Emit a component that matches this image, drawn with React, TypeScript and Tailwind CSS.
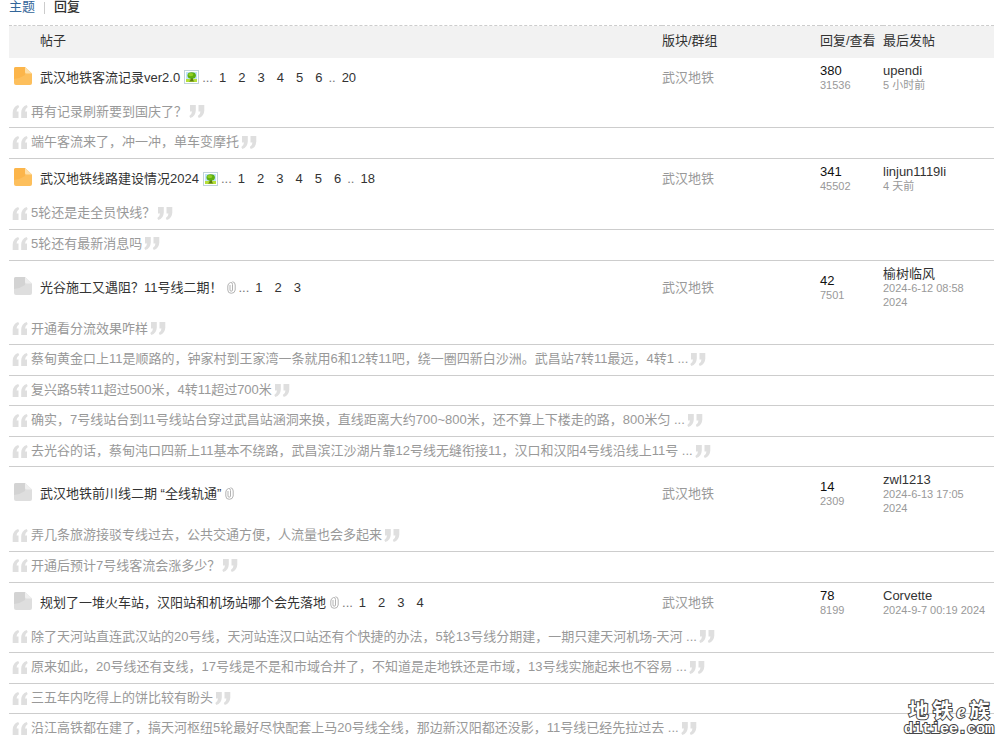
import React from 'react';

interface Thread {
  title: string;
  hot?: boolean;
  attach: 'image' | 'clip';
  pages: number[];
  lastPage?: number;
  replies: number;
  views: number;
  author: string;
  date: string;
  quotes: string[];
}

const forumName = '武汉地铁';

const threads: Thread[] = [
  {
    title: '武汉地铁客流记录ver2.0',
    hot: true,
    attach: 'image',
    pages: [1, 2, 3, 4, 5, 6],
    lastPage: 20,
    replies: 380,
    views: 31536,
    author: 'upendi',
    date: '5 小时前',
    quotes: ['再有记录刷新要到国庆了？', '端午客流来了，冲一冲，单车变摩托'],
  },
  {
    title: '武汉地铁线路建设情况2024',
    hot: true,
    attach: 'image',
    pages: [1, 2, 3, 4, 5, 6],
    lastPage: 18,
    replies: 341,
    views: 45502,
    author: 'linjun1119li',
    date: '4 天前',
    quotes: ['5轮还是走全员快线？', '5轮还有最新消息吗'],
  },
  {
    title: '光谷施工又遇阻？11号线二期！',
    attach: 'clip',
    pages: [1, 2, 3],
    replies: 42,
    views: 7501,
    author: '榆树临风',
    date: '2024-6-12 08:58 2024',
    quotes: [
      '开通看分流效果咋样',
      '蔡甸黄金口上11是顺路的，钟家村到王家湾一条就用6和12转11吧，绕一圈四新白沙洲。武昌站7转11最远，4转1 ...',
      '复兴路5转11超过500米，4转11超过700米',
      '确实，7号线站台到11号线站台穿过武昌站涵洞来换，直线距离大约700~800米，还不算上下楼走的路，800米匀 ...',
      '去光谷的话，蔡甸沌口四新上11基本不绕路，武昌滨江沙湖片靠12号线无缝衔接11，汉口和汉阳4号线沿线上11号 ...',
    ],
  },
  {
    title: '武汉地铁前川线二期 “全线轨通”',
    attach: 'clip',
    pages: [],
    replies: 14,
    views: 2309,
    author: 'zwl1213',
    date: '2024-6-13 17:05 2024',
    quotes: [
      '弄几条旅游接驳专线过去，公共交通方便，人流量也会多起来',
      '开通后预计7号线客流会涨多少？',
    ],
  },
  {
    title: '规划了一堆火车站，汉阳站和机场站哪个会先落地',
    attach: 'clip',
    pages: [1, 2, 3, 4],
    replies: 78,
    views: 8199,
    author: 'Corvette',
    date: '2024-9-7 00:19 2024',
    quotes: [
      '除了天河站直连武汉站的20号线，天河站连汉口站还有个快捷的办法，5轮13号线分期建，一期只建天河机场-天河 ...',
      '原来如此，20号线还有支线，17号线是不是和市域合并了，不知道是走地铁还是市域，13号线实施起来也不容易 ...',
      '三五年内吃得上的饼比较有盼头',
      '沿江高铁都在建了，搞天河枢纽5轮最好尽快配套上马20号线全线，那边新汉阳都还没影，11号线已经先拉过去 ...',
    ],
  },
];

const PageIcon = ({ hot }: { hot?: boolean }) => (
  <svg width="18" height="18" viewBox="0 0 18 18" aria-hidden="true">
    <path d="M2 0H11L18 6.500V16Q18 18 16 18H2Q0 18 0 16V2Q0 0 2 0Z" fill={hot ? '#fdbf5c' : '#dedede'} />
    <path d="M2 0H11V8Q6 11.500 0 12V2Q0 0 2 0Z" fill={hot ? '#fcb54a' : '#d3d3d3'} />
    <path d="M11 0L18 6.500H12.500Q11 6.500 11 5Z" fill={hot ? '#fedfa8' : '#efefef'} />
  </svg>
);

const ImageIcon = () => (
  <svg width="15" height="14" viewBox="0 0 15 14" aria-hidden="true">
    <rect x=".5" y=".5" width="14" height="13" fill="#fff" stroke="#c0d3da" />
    <rect x="2" y="2" width="11" height="7" fill="#bfe4fa" />
    <rect x="2" y="9" width="11" height="3" fill="#b4df38" />
    <path d="M6.500 7H9V10L10.500 11.500H5L6.500 10Z" fill="#5c7d12" />
    <ellipse cx="7.700" cy="5.400" rx="4.200" ry="3.200" fill="#5db012" />
    <ellipse cx="6.800" cy="4.600" rx="2.500" ry="1.700" fill="#93cf24" />
  </svg>
);

const ClipIcon = () => (
  <svg width="9" height="13" viewBox="0 0 9 13" fill="none" stroke="#b3b3b3" aria-hidden="true">
    <path d="M3 4V9Q3 10.200 4.200 10.200T5.500 9V3.500Q5.500 1 3.500 1.500Q.8 2.500.8 5V9Q.8 12.300 4.300 12.300T8.200 9V4Q8.200 1 5.500 .7" />
  </svg>
);

const QuoteMark = ({ close }: { close?: boolean }) => (
  <svg width="16" height="13" viewBox="0 0 16 13" fill="#dfdfdf" className={close ? '' : 'rotate-180'} aria-hidden="true">
    <path d="M1 0H6.800V5.500Q6.500 11.500 1.300 13L.3 11Q2.800 9.500 3 6.500H1Z" />
    <path d="M9.500 0H15.300V5.500Q15 11.500 9.800 13L8.800 11Q11.300 9.500 11.500 6.500H9.500Z" />
  </svg>
);

const ThreadRow = ({ thread }: { thread: Thread }) => (
  <tr>
    <td className="pl-[5px]">
      <div className="pb-1">
        <PageIcon hot={thread.hot} />
      </div>
    </td>
    <td className="pb-px">
      <div className="flex items-center">
        <a href="#thread" className="mr-1">{thread.title}</a>
        {thread.attach === 'image' ? <ImageIcon /> : <ClipIcon />}
        {thread.pages.length > 0 && (
          <span className="ml-[3px] flex gap-3">
            <span className="-mr-1.5 text-[#777]">...</span>
            {thread.pages.map((page) => (
              <a key={page} href="#page">{page}</a>
            ))}
            {thread.lastPage && (
              <>
                <span className="-mx-1.5 text-[#777]">..</span>
                <a href="#page">{thread.lastPage}</a>
              </>
            )}
          </span>
        )}
      </div>
    </td>
    <td className="pb-px">
      <a href="#forum" className="text-[#999]">{forumName}</a>
    </td>
    <td className="pt-[5px] pb-[6px]">
      <a href="#thread" className="block leading-[15px] text-[#111]">{thread.replies}</a>
      <span className="block text-[11px] leading-[14px] text-[#999]">{thread.views}</span>
    </td>
    <td className="pt-[5px] pr-1 pb-[6px]">
      <a href="#user" className="block leading-[15px]">{thread.author}</a>
      <a href="#last" className="block text-[11px] leading-[14px] text-[#999]">{thread.date}</a>
    </td>
  </tr>
);

const QuoteRow = ({ text }: { text: string }) => (
  <tr className="h-[30px] border-b border-[#cdcdcd] odd:h-[31px] group-last:last:h-[26px] group-last:last:border-0">
    <td colSpan={5} className="pl-[3px] align-top">
      <div className="flex items-center gap-[3px] pt-1">
        <QuoteMark />
        <a href="#quote" className="-mr-px leading-5 whitespace-nowrap text-[#999]">{text}</a>
        <QuoteMark close />
      </div>
    </td>
  </tr>
);

export default function App() {
  return (
    <main className="relative min-h-screen bg-white pr-1.5 pl-[9px] font-['Liberation_Sans','Noto_Sans_CJK_SC',sans-serif] text-[13px] leading-[15px] text-[#333]">
      <nav className="flex h-[25px] items-start gap-[9px] leading-[13px]">
        <a href="#threads" className="text-[#369]">主题</a>
        <span className="mt-0.5 h-3 w-px bg-[#ccc]" />
        <a href="#replies" className="font-medium">回复</a>
      </nav>

      <table className="w-full table-fixed border-collapse text-left">
        <colgroup>
          <col className="w-[31px]" />
          <col />
          <col className="w-[158px]" />
          <col className="w-[63px]" />
          <col className="w-[111px]" />
        </colgroup>
        <thead>
          <tr className="h-[32px] border-t border-dashed border-[#cdcdcd] bg-[#f2f2f2]">
            <th />
            <th className="pb-[3px] font-normal">帖子</th>
            <th className="pb-[3px] font-normal">版块/群组</th>
            <th className="pb-[3px] font-normal whitespace-nowrap">回复/查看</th>
            <th className="pb-[3px] font-normal">最后发帖</th>
          </tr>
        </thead>
        {threads.map((thread) => (
          <tbody key={thread.title} className="group">
            <ThreadRow thread={thread} />
            {thread.quotes.map((quote) => (
              <QuoteRow key={quote} text={quote} />
            ))}
          </tbody>
        ))}
      </table>

      {/* Site watermark */}
      <div className="absolute right-1.5 bottom-0.5 flex flex-col items-center font-bold text-white [-webkit-text-stroke:2px_#444] [paint-order:stroke]">
        <div className="flex gap-1 text-xl leading-[20px]">
          <span>地</span>
          <span>铁</span>
          <span className="font-['Liberation_Serif',serif] text-xl leading-[20px] italic">e</span>
          <span>族</span>
        </div>
        <span className="font-['Liberation_Mono',monospace] text-[15px] leading-[17px]">ditiee.com</span>
      </div>
    </main>
  );
}
